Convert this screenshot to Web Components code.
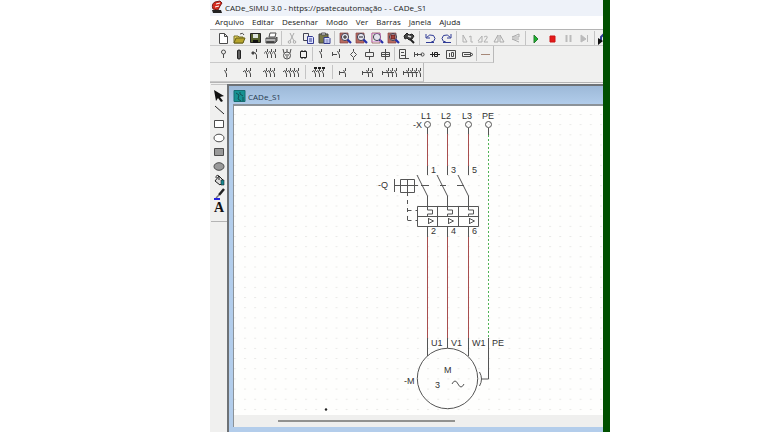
<!DOCTYPE html>
<html lang="pt">
<head>
<meta charset="utf-8">
<title>CADe_SIMU 3.0</title>
<style>
  body { margin: 0; background: #fff; font-family: "Open Sans", "Noto Sans", sans-serif; font-size: 8px; color: #222; }
</style>
</head>
<body>
<cad-app></cad-app>
<script>
const contact = (x, y = 0) => `<path d="M${x + .5} ${2 + y}v3M${x - 1.5} ${4 + y}l2 4v3"/>`;
const lens = (inner, page = '#b86a60') => `<path d="M2 2h8v10H2z" fill="${page}" stroke="#844" stroke-width=".7"/><circle cx="7" cy="6" r="3.6" fill="#e4e4ee" stroke="#445"/><path d="M9.500 8.500l3.500 3.500" stroke="#2430a8" stroke-width="2.200"/>${inner}`;
const ICONS = {
  new: '<path d="M3.500 2.500h5l3 3v7h-8zM8.500 2.500v3h3" fill="#fff"/>',
  open: '<path d="M2 5h4l1 1h4v6H2z" fill="#e8d45a" stroke="#77702a"/><path d="M2 12l2-5h9l-2 5z" fill="#b7a52c" stroke="#66601a"/><path d="M8 3q3-2 4 1" />',
  save: '<path d="M2.500 2.500h10v9h-10z" fill="#55602c" stroke="#222"/><path d="M5 3h5v4H5z" fill="#dde4dc" stroke="none"/><path d="M5 9h5v3H5z" fill="#111" stroke="none"/>',
  print: '<path d="M5 6l1-4h6l-1 4z" fill="#fff"/><path d="M2 7h10l1-1v4l-2 2H2z" fill="#777"/><path d="M2 9h9" stroke="#eee"/><path d="M3 11h7" stroke="#222"/>',
  cut: '<g stroke="#aaa"><path d="M5 2l4 8M9 2L5 10"/><circle cx="4.500" cy="11" r="1.300"/><circle cx="9.500" cy="11" r="1.300"/></g>',
  copy: '<path d="M2.500 2.500h5v7h-5z" fill="#eee" stroke="#445"/><path d="M6.500 5.500h5l1 1v6h-6z" fill="#dde2ff" stroke="#333a90"/><path d="M8 8h3M8 10h3" stroke="#333a90"/>',
  paste: '<path d="M2 3h9v9H2z" fill="#777746" stroke="#444"/><path d="M4.500 2h4v2h-4z" fill="#ddd" stroke="#555"/><path d="M7 6.500h5l1 1v5H7z" fill="#dde2ff" stroke="#333a90"/><path d="M8.500 9h3M8.500 11h3" stroke="#333a90" stroke-width=".7"/>',
  zin: lens('<path d="M5 6h4M7 4v4" stroke="#222"/>'),
  zout: lens('<path d="M5 6h4" stroke="#222"/>'),
  zbox: lens('<path d="M1.500 2.500h9v8h-9z" stroke="#d070d0" stroke-dasharray="1 1"/>', '#f0f0ef'),
  zall: lens('<path d="M5 4h4v4H5z" fill="#a54039" stroke="#622"/>'),
  pan: '<path d="M2 5l3-3 2 2 3-1 2 2-2 3-3 1-2-2-2 1z" fill="#444" stroke="#222"/><path d="M6 5l3 1" stroke="#ddd" stroke-width="1.500"/><path d="M8 8l4 4" stroke="#222" stroke-width="2"/>',
  undo: '<path d="M3 3v4h4M3.500 6.500q3-4 7-2 3 3 0 6h-2M3 11.500h8" stroke="#303c96"/>',
  redo: '<path d="M12 3v4H8M11.500 6.500q-3-4-7-2-3 3 0 6h2M4 11.500h8" stroke="#303c96"/>',
  rotl: '<path d="M3 4v7h4zM9 6l2-1v6h2" stroke="#b0b0b0"/>',
  rotr: '<path d="M2 10l4-5v6H2M8 6q4-2 3 1l-3 4h4" stroke="#b0b0b0"/>',
  flip: '<path d="M6 4l-4 7h4zM8 4l4 7H8z" stroke="#aaa"/>',
  mirror: '<path d="M11 3L4 6h7zM11 11L4 8h7" stroke="#aaa"/>',
  play: '<path d="M5 4l4 4-4 4z" fill="#19b52c" stroke="#287b30"/>',
  stop: '<path d="M5 5h5v6H5z" fill="#e51919" stroke="#ca1515"/>',
  pause: '<path d="M5.500 4v7M9.500 4v7" stroke="#bbb" stroke-width="2"/>',
  step: '<path d="M4 4l5 4-5 3zM10.500 4v7" fill="#bbb" stroke="#bbb"/>',
  sim: '<path d="M3 11V6l3-3h8" stroke="#303c96" stroke-width="2"/><path d="M0 7l5 3-5 4z" fill="#111" stroke="none"/>',
  term: '<circle cx="7.500" cy="5" r="2"/><path d="M7.500 7v4"/>',
  fuse: '<path d="M5.500 3.500h3v8h-3z" fill="#777" stroke="#222"/><path d="M7 2v11"/>',
  sw1: '<path d="M8.500 2v3M6.500 5l2 3v4"/><path d="M4 5h2v2h-2z" fill="#333"/>',
  sw3: contact(3) + contact(7) + contact(11) + '<path d="M0 6h10" stroke-dasharray="1 1"/>',
  motor: '<circle cx="7" cy="8.500" r="3.500"/><path d="M3 2l1 4M7 2v3M11 2l-1 4M5 8h4M6 10h2"/>',
  coil: '<path d="M4.500 4.500h6v6h-6zM6 3v2M9 3v2M6 10v2M9 10v2" stroke="#222"/>',
  no: contact(7),
  nc: contact(9) + '<path d="M2.500 5v4M2 7.500h5"/>',
  lamp: '<path d="M7.500 4.500l3 3-3 3-3-3zM7.500 2v2M7.500 11v2"/>',
  relay: '<path d="M3.500 5.500h8v4h-8zM7.500 2v3M7.500 10v3"/>',
  relay2: '<path d="M3.500 5.500h8v4h-8zM7.500 2v11M4 7.500h7"/>',
  plc: '<path d="M3.500 2.500h6v9h-6zM5 5.500h3M5 8.500h4M9 11.500h4"/>',
  sensor: '<path d="M2.500 5v5M2 7.500h8M5.500 6v3"/><circle cx="10.500" cy="7.500" r="1.600"/>',
  sensor2: '<path d="M2 7.500h10M4.500 5v5M6.500 5.500h3v4h-3z" stroke="#222"/>',
  block: '<path d="M2.500 3.500h9v8h-9zM5.500 6v4M7.500 5.500h2v4h-2z"/>',
  ladder: '<path d="M2.500 5.500h8v4h-8zM4 7.500h7M11 6l2 1.500-2 1.500"/>',
  wire: '<path d="M3 7.500h9" stroke="#a68878"/>',
  c1: contact(10, 1),
  c2: contact(8, 1) + contact(12, 1) + '<path d="M5 6.500h6" stroke-dasharray="1 1"/>',
  c3: contact(6, 1) + contact(10, 1) + contact(14, 1) + '<path d="M3 6.500h10" stroke-dasharray="1 1"/>',
  c4: contact(4, 1) + contact(8, 1) + contact(12, 1) + contact(16, 1) + '<path d="M1 6.500h14" stroke-dasharray="1 1"/>',
  k3: contact(6, 1) + contact(10, 1) + contact(14, 1) + '<path d="M3 6.500h10" stroke-dasharray="1 1"/><path d="M5 3h3M9 3h3M13 3h3" stroke="#222" stroke-width="2"/>',
  m1: contact(9, 1) + '<path d="M3.500 6v4M4 7.500h4"/>',
  m2: contact(10, 1) + contact(14, 1) + '<path d="M4.500 6v4M4 7.500h9"/>',
  m3: contact(8, 1) + contact(12, 1) + contact(16, 1) + '<path d="M2.500 6v4M2 7.500h12"/>',
  m4: contact(6, 1) + contact(10, 1) + contact(14, 1) + contact(18, 1) + '<path d="M1.500 6v4M1 7.500h15"/>',
  arrow: '<path d="M2 1l10 6-4 1 3 4-2 1-3-4-2 3z" fill="#111" stroke="none"/>',
  line: '<path d="M3 3l9 8" stroke="#222"/>',
  rect: '<path d="M2.500 3.500h9v7h-9z" fill="#fff"/>',
  oval: '<ellipse cx="7" cy="7" rx="5" ry="3.800" fill="#fff"/>',
  frect: '<path d="M2.500 3.500h9v7h-9z" fill="#999"/>',
  foval: '<ellipse cx="7" cy="7.500" rx="5" ry="3.800" fill="#999"/>',
  bucket: '<path d="M3 8l4-5 5 5-4 4z" fill="#ddd" stroke="#222"/><path d="M4 5q0-4 3-2v4" stroke="#222"/><path d="M9 7h3v5H9z" fill="#158a94" stroke="#222" stroke-width=".6"/>',
  brush: '<path d="M12 2L7 8" stroke="#222" stroke-width="2.500"/><path d="M7 8l-3 3" stroke="#777" stroke-width="1.500"/><path d="M2 12h6" stroke="#2222dd" stroke-width="2"/>',
  logo: '<path d="M3 8Q1 3 5 1l5-1 2 2-2 3-2 4z" fill="#d62b20" stroke="#7a1b16"/><path d="M6 3l4-1M5 6l4-1" stroke="#fff"/><path d="M2 9h9l1 3H3z" fill="#222" stroke="none"/>',
  doc: '<path d="M1 1.500h11v11H1z" fill="#169292" stroke="#176c70"/><path d="M3 4l3 2-1 4 3 2M7 3v2l3 2M10 8v4" stroke="#145055"/>'
};

function define(name, template, setup) {
  customElements.define(name, class extends HTMLElement {
    connectedCallback() {
      if (this.shadowRoot) return;
      this.attachShadow({ mode: 'open' }).innerHTML = template;
      if (setup) setup.call(this, this.shadowRoot);
    }
  });
}

define('cad-icon', `<style>
  :host { display: block; width: var(--icon-width, 14px); height: 14px; flex: none; }
  svg { display: block; width: 100%; height: 100%; overflow: visible; fill: none; stroke: #4c4c4c; stroke-width: 1; }
</style><svg aria-hidden="true"></svg>`, function (root) {
  root.querySelector('svg').innerHTML = ICONS[this.getAttribute('name')];
});

define('cad-tool', `<style>
  :host { display: block; flex: none; }
  button { display: flex; align-items: center; justify-content: center; width: var(--tool-width, 16px); height: var(--tool-height, 16px); padding: 0; border: 0; background: none; color: #111; font: bold 14px/14px "Liberation Serif", serif; }
</style><button type="button"></button>`, function (root) {
  const name = this.getAttribute('name'), b = root.querySelector('button');
  b.setAttribute('aria-label', name);
  if (name === 'text') b.textContent = 'A';
  else b.innerHTML = `<cad-icon name="${name}"></cad-icon>`;
});

define('cad-toolbar', `<style>
  :host { display: flex; width: fit-content; box-sizing: border-box; height: 17px; max-width: 100%; overflow: hidden; padding-left: 5px; align-items: center; border-right: 1px solid #b9b9b9; border-bottom: 1px solid #c9c9c9; background: #f0f0ef; }
  :host([fill]) { width: 100%; border-right: 0; border-top: 1px solid #b4b4b4; }
  :host([wide]) { --tool-width: 22px; --icon-width: 20px; height: 19px; }
  div { display: contents; }
  i { flex: none; width: var(--sep, 5px); height: 14px; background: linear-gradient(#c4c4c4, #c4c4c4) center / 1px 100% no-repeat; }
</style><div></div>`, function (root) {
  root.querySelector('div').innerHTML = this.getAttribute('tools').split('|').map(g =>
    g.split(' ').map(n => `<cad-tool name="${n}"></cad-tool>`).join('')).join('<i></i>');
});

define('cad-menu', `<style>
  :host { display: block; background: #fff; }
  nav { display: flex; gap: 8px; padding: 0 5px; height: 13px; align-items: center; }
  a { color: #222; text-decoration: none; line-height: 10px; padding-bottom: 1px; }
</style><nav><a href="#">Arquivo</a><a href="#">Editar</a><a href="#">Desenhar</a><a href="#">Modo</a><a href="#">Ver</a><a href="#">Barras</a><a href="#">Janela</a><a href="#">Ajuda</a></nav>`);

define('cad-palette', `<style>
  :host { display: flex; flex-direction: column; align-items: center; align-self: start; width: 16px; padding: 4px 0 6px; border-top: 1px solid #c4c4c4; border-bottom: 1px solid #b4b4b4; --tool-height: 14px; }
</style>` + 'arrow line rect oval frect foval bucket brush text'.split(' ').map(n => `<cad-tool name="${n}"></cad-tool>`).join(''));

const phases = [427, 447, 468];
const phase = (x, i) => `
  <circle cx="${x + .5}" cy="124.500" r="3"/>
  <path d="M${x + .5} 128v6M${x + .5} 166v9M${x - 10} 175l10.500 21v14h5v4h-5v2M${x + .5} 226v11M${x + .5} 338V${i === 1 ? 348 : 356}"/>
  <path class="red" d="M${x + .5} 134v32M${x + .5} 237v101"/>
  <path d="M${x + 1.500} 218v6M${x + 1.500} 218.500l5 2.500-5 2.500"/>
  <text x="${x - 6}" y="119">L${i + 1}</text>
  <text x="${x + 4}" y="173">${i * 2 + 1}</text>
  <text x="${x + 4}" y="234">${i * 2 + 2}</text>
  <text x="${x + 4}" y="346">${'UVW'[i]}1</text>`;

define('circuit-canvas', `<style>
  :host { display: block; min-height: 0; background: #fefefd; overflow: hidden; }
  svg { display: block; width: 100%; height: 100%; fill: none; stroke: #555; stroke-width: 1; }
  text { font: 9px "Liberation Sans", Arial, sans-serif; fill: #333; stroke: none; }
  .red { stroke: #a84e4e; }
  .green { stroke: #4fb456; stroke-dasharray: 2 2; }
</style>
<svg role="img" aria-label="Circuito">
  <defs><pattern id="grid" width="10.170" height="10.170" patternUnits="userSpaceOnUse" patternTransform="translate(10 8)"><path d="M0 .5h2" stroke="#e9e9e7"/></pattern></defs>
  <rect width="100%" height="100%" fill="url(#grid)" stroke="none"/>
  <g transform="translate(-234 -106)">
    ${phases.map(phase).join('')}
    <circle cx="488.500" cy="124.500" r="3"/><path d="M488.500 128v7M488.500 338v41h-7M479.500 372q4 7 0 14"/>
    <path class="green" d="M488.500 135v203"/>
    <path d="M394.500 179v13M394.500 185.500h20M400.500 179.500h14v13h-14zM407.500 179v13M414 185.500h4M421 185.500h8M440 185.500h6M457 185.500h7"/>
    <path d="M407.500 192v29M407.500 210.500h10M407.500 220.500h10" stroke-dasharray="4 4"/>
    <path d="M417.500 206.500h61v20h-61zM417.500 216.500h61M437.500 206v20M458.500 206v20"/>
    <circle cx="447.500" cy="378.500" r="30.200"/>
    <path d="M452 384q3-6 6 0t6 0"/>
    <text x="482" y="119">PE</text><text x="413" y="128">-X</text><text x="378" y="188">-Q</text>
    <text x="492" y="346">PE</text><text x="404" y="384">-M</text><text x="444" y="373">M</text><text x="435" y="388">3</text>
    <circle cx="326" cy="409.500" r="1.200" fill="#222" stroke="none"/>
  </g>
</svg>`);

define('cad-document', `<style>
  :host { display: grid; grid-template-rows: 20px minmax(0, 1fr) 12px; grid-template-columns: minmax(0, 1fr); box-sizing: border-box; min-width: 0; min-height: 0; border-top: 2px solid #6e7276; border-left: 2px solid #6e7276; padding: 0 0 5px 4px; background: linear-gradient(#9db9d8, #b3ceec 20px, #b3cdeb); }
  header { display: flex; align-items: center; gap: 1px; padding-top: 2px; color: #26384d; border-bottom: 2px solid #8b9298; box-sizing: border-box; }
  circuit-canvas { border-left: 1px solid #8b9298; }
  footer { display: flex; align-items: center; background: #efefee; border-left: 1px solid #8b9298; }
  footer::before { content: ""; width: 48%; height: 2px; margin-left: 12%; background: #929290; }
</style>
<header><cad-icon name="doc"></cad-icon><span>CADe_S1</span></header>
<circuit-canvas></circuit-canvas>
<footer></footer>`);

define('cad-window', `<style>
  :host { display: grid; grid-template-columns: minmax(0, 1fr); grid-template-rows: auto auto auto 1fr; min-width: 0; min-height: 0; background: #f0f0ef; }
  header { display: flex; align-items: center; gap: 1px; height: 16px; line-height: 10px; background: #eef2f9; }
  header span { padding-bottom: 1px; }
  .bars { --sep: 2px; border-bottom: 1px solid #b4b4b4; }
  .bars > [fill] , .bars > [wide] { --sep: 5px; }
  main { display: grid; grid-template-columns: auto minmax(0, 1fr); min-height: 0; min-width: 0; padding: 1px 0 0 1px; }
</style>
<header><cad-icon name="logo"></cad-icon><span>CADe_SIMU 3.0 - https://psatecautomação - - CADe_S1</span></header>
<cad-menu></cad-menu>
<div class="bars">
  <cad-toolbar fill tools="new open save print|cut copy paste|zin zout zbox zall pan|undo redo|rotl rotr flip mirror|play stop pause step|sim"></cad-toolbar>
  <cad-toolbar tools="term fuse sw1 sw3 motor coil|no nc lamp relay relay2|plc sensor sensor2 block ladder|wire"></cad-toolbar>
  <cad-toolbar wide tools="c1 c2 c3 c4|k3|m1 m2 m3 m4"></cad-toolbar>
</div>
<main><cad-palette></cad-palette><cad-document></cad-document></main>`);

define('cad-app', `<style>
  :host { display: grid; grid-template-columns: 210fr 393fr 7px 158fr; height: 100vh; }
  cad-window { grid-column: 2; }
  aside { grid-column: 3; background: #005000; }
</style><cad-window></cad-window><aside></aside>`);
</script>
</body>
</html>
